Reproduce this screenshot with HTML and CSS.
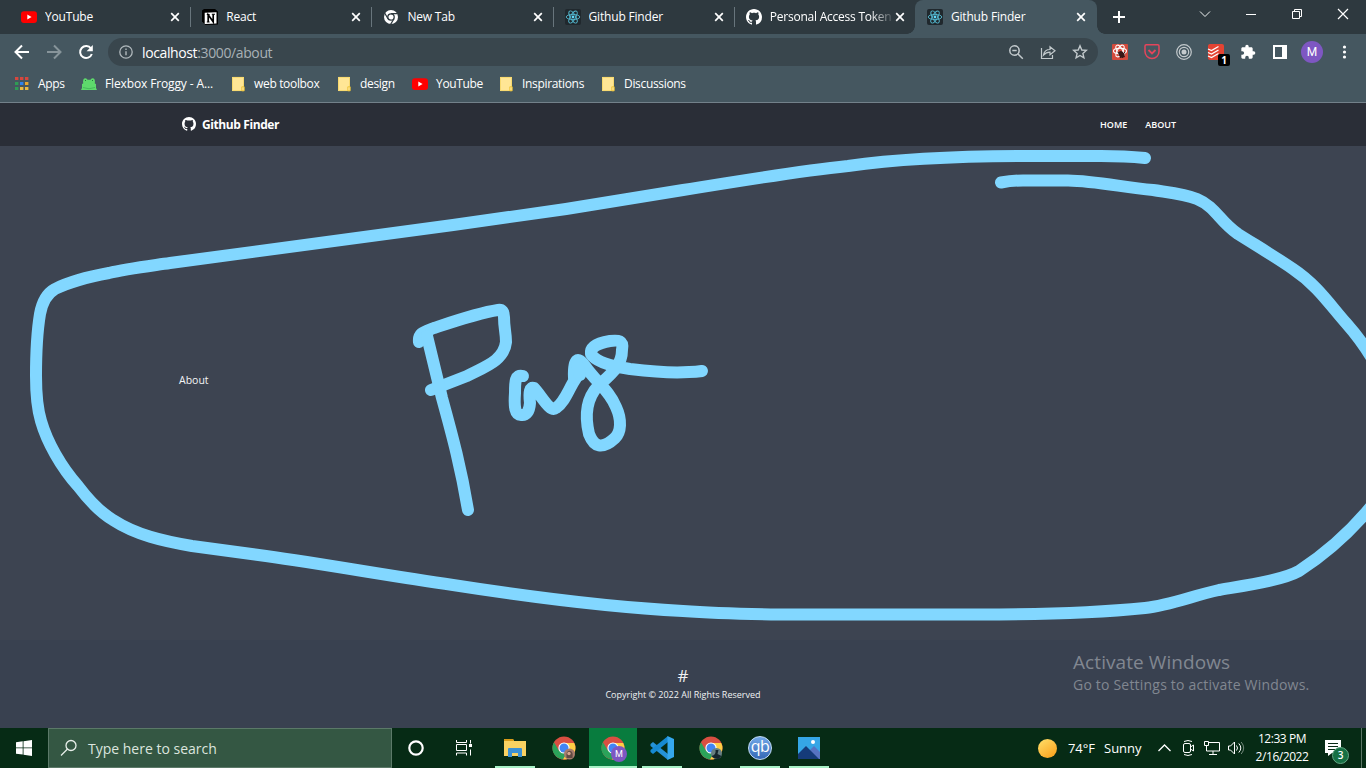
FILE: index.html
```html
<!DOCTYPE html>
<html lang="en">
<head>
<meta charset="utf-8">
<title>Github Finder</title>
<link rel="stylesheet" href="styles.css">
</head>
<body>
<svg class="defs" width="0" height="0" aria-hidden="true">
  <symbol id="close" viewBox="0 0 10 10"><path d="M1.2 1.2 8.8 8.8M8.8 1.2 1.2 8.8" stroke="#fff" stroke-width="1.7"/></symbol>
  <symbol id="youtube" viewBox="0 0 16 16"><rect y="2.2" width="16" height="11.8" rx="3" fill="#f00"/><path d="M6.3 5.6v4.9L10.6 8z" fill="#fff"/></symbol>
  <symbol id="react" viewBox="0 0 16 16"><rect width="16" height="16" rx="2" fill="#20282d"/><g fill="none" stroke="#53b7ce" stroke-width=".9"><ellipse cx="8" cy="8" rx="6.8" ry="2.6"/><ellipse cx="8" cy="8" rx="6.8" ry="2.6" transform="rotate(60 8 8)"/><ellipse cx="8" cy="8" rx="6.8" ry="2.6" transform="rotate(120 8 8)"/></g><circle cx="8" cy="8" r="1.4" fill="#61dafb"/></symbol>
  <symbol id="github" viewBox="0 0 16 16"><path fill="#fff" d="M8 0C3.58 0 0 3.58 0 8c0 3.54 2.29 6.53 5.47 7.59.4.07.55-.17.55-.38 0-.19-.01-.82-.01-1.49-2.01.37-2.53-.49-2.69-.94-.09-.23-.48-.94-.82-1.13-.28-.15-.68-.52-.01-.53.63-.01 1.08.58 1.23.82.72 1.21 1.87.87 2.33.66.07-.52.28-.87.51-1.07-1.78-.2-3.64-.89-3.64-3.95 0-.87.31-1.59.82-2.15-.08-.2-.36-1.02.08-2.12 0 0 .67-.21 2.2.82.64-.18 1.32-.27 2-.27s1.36.09 2 .27c1.53-1.04 2.2-.82 2.2-.82.44 1.1.16 1.92.08 2.12.51.56.82 1.27.82 2.15 0 3.07-1.87 3.75-3.65 3.95.29.25.54.73.54 1.48 0 1.07-.01 1.93-.01 2.2 0 .21.15.46.55.38A8.01 8.01 0 0 0 16 8c0-4.42-3.58-8-8-8z"/></symbol>
  <symbol id="folder" viewBox="0 0 16 16"><path d="M2 1h12v14H2z" fill="#ffe695"/><path d="M2.5 1.4v13.2h11V1.4z" fill="none" stroke="#f5d565" stroke-width=".8"/><path d="M11.8 14.8v-4h2.4v4z" fill="#ffe695" stroke="#ecc233" stroke-width=".9"/></symbol>
  <symbol id="chrome" viewBox="0 0 24 24"><circle cx="12" cy="12" r="11.5" fill="#d94f42"/><path d="M2 6.2A11.5 11.5 0 0 0 11 23.5l5.2-8.8H7z" fill="#2ba35a"/><path d="M22.2 7H12l4.6 7.6L11 23.5A11.5 11.5 0 0 0 22.2 7z" fill="#ffce44"/><circle cx="12" cy="12" r="5.6" fill="#fff"/><circle cx="12" cy="12" r="4.5" fill="#4285f4"/></symbol>
</svg>

<header class="browser">
  <div class="tabstrip">
    <div class="tab"><svg class="fav"><use href="#youtube"/></svg><span class="title">YouTube</span><svg class="x"><use href="#close"/></svg></div>
    <div class="tab"><svg class="fav" viewBox="0 0 16 16"><path d="M0 1.500 2 0h11l3 2.600V15.600L3.500 16 0 12.500z" fill="#000"/><path d="M2.700 3.800 14.500 3.200v11.200l-11.800.600z" fill="#fff"/><path d="M4.800 5.500h2.800M9.800 5.200h3.200M4.800 13h2.800" stroke="#000" stroke-width="1.100"/><path d="M6.200 13V5.800l5 7V5.200" fill="none" stroke="#000" stroke-width="1.700"/></svg><span class="title">React</span><svg class="x"><use href="#close"/></svg></div>
    <div class="tab"><svg class="fav" viewBox="0 0 16 16"><circle cx="8" cy="8" r="7" fill="#fff"/><circle cx="8" cy="8" r="3.200" fill="#fff" stroke="#2e393f" stroke-width="1.300"/><path d="M8 4.600h6.600M5 9.800 1.800 4.200M11 9.800l-3.400 5.600" stroke="#2e393f" stroke-width="1.200"/></svg><span class="title">New Tab</span><svg class="x"><use href="#close"/></svg></div>
    <div class="tab"><svg class="fav"><use href="#react"/></svg><span class="title">Github Finder</span><svg class="x"><use href="#close"/></svg></div>
    <div class="tab plain"><svg class="fav"><use href="#github"/></svg><span class="title fade">Personal Access Token</span><svg class="x"><use href="#close"/></svg></div>
    <div class="tab active"><svg class="fav"><use href="#react"/></svg><span class="title">Github Finder</span><svg class="x"><use href="#close"/></svg></div>
    <svg class="plus" viewBox="0 0 12 12"><path d="M6 0v12M0 6h12" stroke="#fff" stroke-width="2"/></svg>
    <div class="winctl">
      <svg viewBox="0 0 46 28"><path d="m18 11.500 5 5 5-5" fill="none" stroke="#eef1f2"/></svg>
      <svg viewBox="0 0 46 28"><path d="M18 14.500h10" stroke="#fff"/></svg>
      <svg viewBox="0 0 46 28"><path d="M18.500 11.500h7v7h-7zM20.500 11.500v-2h7v7h-2" fill="none" stroke="#fff"/></svg>
      <svg viewBox="0 0 46 28"><path d="m18 9 10 10M28 9 18 19" stroke="#fff" stroke-width="1.200"/></svg>
    </div>
  </div>

  <div class="toolbar">
    <div class="navbtns">
      <svg viewBox="0 0 32 32"><path d="M23 16H10M16 9.500 9.500 16l6.500 6.500" fill="none" stroke="#fff" stroke-width="2"/></svg>
      <svg viewBox="0 0 32 32"><path d="M9 16h13M16 9.500l6.500 6.500-6.500 6.500" fill="none" stroke="#87949a" stroke-width="2"/></svg>
      <svg viewBox="0 0 32 32"><path d="M21 12.500A6 6 0 1 0 21.800 18" fill="none" stroke="#fff" stroke-width="2"/><path d="M22.800 9v6.200h-6.200z" fill="#fff"/></svg>
    </div>
    <div class="omnibox">
      <svg class="info" viewBox="0 0 14 14"><circle cx="7" cy="7" r="6.200" fill="none" stroke="#b1b9bd" stroke-width="1.300"/><path d="M7 6.200v4M7 3.600v1.500" stroke="#b1b9bd" stroke-width="1.400"/></svg>
      <span class="url">localhost<span class="dim">:3000/about</span></span>
      <svg class="cell" viewBox="0 0 32 32"><g fill="none" stroke="#c2c9cc" stroke-width="1.500"><circle cx="14.500" cy="14.500" r="4.700"/><path d="m18 18 4.800 4.800M12.300 14.500h4.400"/></g></svg>
      <svg class="cell" viewBox="0 0 32 32"><path d="M9.500 12v10.500h11V19M11.500 19q1-5.500 6.500-5.500v-2.700l5 4-5 4v-2.600q-4 0-6.500 2.800z" fill="none" stroke="#c2c9cc" stroke-width="1.200"/></svg>
      <svg class="cell" viewBox="0 0 32 32"><path d="m16 9.800 1.800 4.200 4.500.4-3.400 3 1 4.400-3.900-2.300-3.900 2.300 1-4.400-3.400-3 4.500-.4z" fill="none" stroke="#c2c9cc" stroke-width="1.400"/></svg>
    </div>
    <div class="extensions">
      <svg viewBox="0 0 32 32"><rect x="8" y="8" width="16" height="16" rx="1" fill="#d34b3d"/><g fill="none" stroke="#fff" stroke-width="1.100"><ellipse cx="16" cy="15" rx="6.500" ry="2.700"/><ellipse cx="16" cy="15" rx="6.500" ry="2.700" transform="rotate(60 16 15)"/><ellipse cx="16" cy="15" rx="6.500" ry="2.700" transform="rotate(120 16 15)"/></g><ellipse cx="17.500" cy="18.500" rx="2.700" ry="3.600" transform="rotate(-35 17.500 18.500)" fill="#391615"/><path d="m13.500 16 7.500 5M21 16l-5 6" stroke="#391615"/></svg>
      <svg viewBox="0 0 32 32"><path d="M9 10q0-1.200 1.200-1.200h11.600Q23 8.800 23 10v5.500a7 7 0 0 1-14 0z" fill="none" stroke="#e4455b" stroke-width="1.500"/><path d="m12.500 14 3.500 3.400 3.500-3.400" fill="none" stroke="#e4455b" stroke-width="1.800"/></svg>
      <svg viewBox="0 0 32 32"><g fill="none" stroke="#c4cacd" stroke-width="1.200"><circle cx="16" cy="16" r="7.300"/><circle cx="16" cy="16" r="4.700"/></g><circle cx="16" cy="16" r="2.500" fill="#c4cacd"/></svg>
      <div class="todo"><svg viewBox="0 0 32 32"><rect x="8" y="8" width="16" height="16" rx="2" fill="#e44332"/><path d="m8 13 3.500 1.500 7-4M8 16.500l3.500 1.500 7-4M8 20l3.500 1.500 7-4" fill="none" stroke="#fff" stroke-width="1.300"/></svg><span class="count">1</span></div>
      <svg viewBox="0 0 24 24" class="puzzle"><path fill="#fff" d="M20.500 11H19V7c0-1.100-.9-2-2-2h-4V3.500a2.500 2.500 0 0 0-5 0V5H4c-1.100 0-2 .9-2 2v3.800h1.500a2.700 2.700 0 0 1 0 5.400H2V20c0 1.100.9 2 2 2h3.800v-1.500a2.700 2.700 0 0 1 5.400 0V22H17c1.100 0 2-.9 2-2v-4h1.500a2.500 2.500 0 0 0 0-5z"/></svg>
      <svg viewBox="0 0 32 32"><path d="M9 9h14v14H9zm2 2v10h7V11z" fill="#fff" fill-rule="evenodd"/></svg>
      <span class="avatar">M</span>
      <svg viewBox="0 0 32 32"><g fill="#fff"><circle cx="16.500" cy="11" r="1.600"/><circle cx="16.500" cy="16" r="1.600"/><circle cx="16.500" cy="21" r="1.600"/></g></svg>
    </div>
  </div>

  <nav class="bookmarks">
    <span><svg viewBox="0 0 16 16"><path d="M1 1h3.400v3H1zM6 1h3.400v3H6zM11 1h3.400v3H11z" fill="#d7473e"/><path d="M1 6h3.400v3H1z" fill="#2f9c55"/><path d="M6 6h3.400v3H6z" fill="#2f83ed"/><path d="M11 6h3.400v3H11z" fill="#e9a72f"/><path d="M1 11h3.400v3H1z" fill="#2f9c55"/><path d="M6 11h3.400v3H6zM11 11h3.400v3H11z" fill="#eaba43"/></svg>Apps</span>
    <span class="frog"><svg viewBox="0 0 16 16"><path d="M2.200 7.500Q1.500 2.500 4 2.200q2-.2 2.500 1.500h3Q10 2 12 2.200q2.500.3 1.800 5.300l1.200.5v4l1 2H0l1-2V8z" fill="#5ed96c"/><path d="M2 11.500Q8 14 14 11.500" stroke="#45b95b" fill="none"/><path d="M4 4.500h1M11 4.500h1" stroke="#237b3b"/></svg>Flexbox Froggy - A...</span>
    <span><svg><use href="#folder"/></svg>web toolbox</span>
    <span><svg><use href="#folder"/></svg>design</span>
    <span><svg><use href="#youtube"/></svg>YouTube</span>
    <span><svg><use href="#folder"/></svg>Inspirations</span>
    <span><svg><use href="#folder"/></svg>Discussions</span>
  </nav>
</header>

<div class="page">
  <nav class="navbar">
    <span class="brand"><svg><use href="#github"/></svg>Github Finder</span>
    <span class="links"><a>HOME</a><a>ABOUT</a></span>
  </nav>
  <main class="content">About</main>
  <footer class="footer">
    <span class="hash">#</span>
    <span class="copy">Copyright © 2022 All Rights Reserved</span>
  </footer>
  <!-- freehand annotation layer -->
  <svg class="ink" viewBox="0 103 1366 625">
    <path d="M1145 158C1130 156.500 1115 156 1101 156H1030C945 156 890 160 848 166C790 172 735 182 683 190L566 209L453 225L170 263C142 267 125 269 109 273C87 277 67 283 55 289C46 294 42 303 40 314C37 332 36 355 36 376C36 393 38 411 41 421C47 442 61 467 78 486C90 502 100 512 113 520C136 535 163 541 192 546C220 550 245 553 266 556C330 565 390 576 453 585C530 597 605 607 683 611C710 613 745 614 780 614.500H980C1040 614.500 1095 613 1145 608C1170 605 1192 596 1219 590C1248 585 1283 580 1299 571C1325 554 1350 533 1374 503"/>
    <path d="M1001 182.500Q1012 180.500 1023 180.500H1068C1095 181 1122 187 1153 190C1173 193 1185 194 1197 199C1216 207 1219 221 1238 234C1257 246 1274 256 1293 269C1317 285 1330 305 1346 323C1354 332 1364 344 1374 362"/>
    <path d="M419 342C418 333 424 332 434 328C455 321 478 313 498 310Q504 309 504 317C504 329 506 332 506 342C504 361 484 367 467 376Q449 383 431 390"/>
    <path d="M427 336L442 398C453 438 461 468 468 510"/>
    <path d="M523 376C515 374 515 382 515 393C514 407 515 415 521 415Q529 416 530 403Q528 386 534 388C541 395 550 413 556 408C565 402 569 388 576 378"/>
    <path d="M574 378C573 358 578 356 585 366C596 382 609 390 616 407C622 420 621 432 615 438C602 450 594 447 589 434C585 417 585 400 598 386C611 374 622 366 622 350C624 340 618 340 610 341C598 343 590 347 591 354C595 361 610 366 630 369C655 372 676 373 689 372Q696 372 702 371"/>
    <path d="M577 364 580 375"/>
  </svg>
  <div class="watermark"><span class="wm1">Activate Windows</span><span class="wm2">Go to Settings to activate Windows.</span></div>
</div>

<footer class="taskbar">
  <div class="start"><svg viewBox="0 0 16 16"><path d="M0 2.300 6.700 1.300v6.200H0zM7.500 1.200 16 0v7.500H7.500zM0 8.300h6.700v6.300L0 13.700zM7.500 8.300H16V16l-8.500-1.200z" fill="#fff"/></svg></div>
  <div class="search"><svg viewBox="0 0 18 18"><circle cx="11" cy="6.500" r="5" fill="none" stroke="#e8efea" stroke-width="1.300"/><path d="m7.500 10-6.500 6.500" stroke="#e8efea" stroke-width="1.300"/></svg><span>Type here to search</span></div>
  <div class="app"><svg viewBox="0 0 24 24"><circle cx="12" cy="12" r="6.700" fill="none" stroke="#fff" stroke-width="2.200"/></svg></div>
  <div class="app"><svg viewBox="0 0 24 24"><path d="M4.500 4v2.500h10V4M4.500 19.500V17h10v2.500M4.500 8.500h10v6h-10zM18.500 4v3.500M18.500 13.500v6" fill="none" stroke="#fff"/><path d="M17 8h3v3h-3z" fill="#fff"/></svg></div>
  <div class="pinned">
    <div class="app open"><svg viewBox="0 0 24 24"><path d="M1 3h9l1 2h12v15H1z" fill="#f9d262"/><path d="M1 3h9l1 2H1z" fill="#d99b19"/><path d="M5 21v-8q0-1 1-1h12q1 0 1 1v8h-4v-4H9v4z" fill="#3c91d4"/></svg></div>
    <div class="app"><svg viewBox="0 0 24 24"><use href="#chrome"/><circle cx="17.500" cy="18" r="5.500" fill="#a77c6c"/><path d="M14.500 22v-4q1-4 4-3t2 7z" fill="#614a43"/><circle cx="17" cy="17.500" r="1.700" fill="#d7a58d"/></svg></div>
    <div class="app open current"><svg viewBox="0 0 24 24"><use href="#chrome"/></svg><span class="mini">M</span></div>
    <div class="app open"><svg viewBox="0 0 24 24"><path d="M.5 8 3 6l15 12v6L.5 10z" fill="#2592d7"/><path d="M.5 16 3 18 18 6V0L.5 14z" fill="#168ad2"/><path d="m17.500 0 6.500 3v18l-6.500 3z" fill="#35a8ed"/></svg></div>
    <div class="app"><svg viewBox="0 0 24 24"><use href="#chrome"/><circle cx="17.500" cy="17.500" r="5.500" fill="#667e80"/><path d="M12.500 20q5-1 4-6h3l-1 4 4 2-3 3q-5 0-7-3z" fill="#15252d"/></svg></div>
    <div class="app open"><span class="qb">qb</span></div>
    <div class="app open"><svg viewBox="0 0 24 24"><path d="M1 1h22v22H1z" fill="#35a6e6"/><path d="M12 15 17 10l6 6v7h-5z" fill="#5673c2"/><path d="m1 18 8-8 13 13H1z" fill="#153b79"/><circle cx="16" cy="6" r="2" fill="#fff"/></svg></div>
  </div>
  <div class="tray">
    <span class="sun"></span><span class="temp">74°F</span><span class="sunny">Sunny</span>
    <div class="trayicons">
      <svg viewBox="0 0 24 24"><path d="m6.500 15 6-6 6 6" fill="none" stroke="#fff" stroke-width="1.300"/></svg>
      <svg viewBox="0 0 24 24"><path d="M8 5.500q4-2 8 0M8 18.500q4 2 8 0M7.500 9q0-1.500 1.500-1.500h4q1.500 0 1.500 1.500v6q0 1.500-1.500 1.500H9q-1.500 0-1.500-1.500zM14.500 11l3-2v6l-3-2z" fill="none" stroke="#fff"/></svg>
      <svg viewBox="0 0 24 24"><path d="M9 6.500h10.500v8.500H6.500v-4M4.500 5.500h4v4h-4zM6.500 9.500V11M13 15v3M9 18.500h8" fill="none" stroke="#fff"/></svg>
      <svg viewBox="0 0 24 24"><path d="M4.500 10v4h2l4 4V6l-4 4zM12.500 9.500q2 2.500 0 5M14.800 7.500q4 4.500 0 9" fill="none" stroke="#fff"/><path d="M17.200 6q5 6 0 12" fill="none" stroke="#72887b"/></svg>
    </div>
    <div class="clock"><span>12:33 PM</span><span>2/16/2022</span></div>
    <div class="notif"><svg viewBox="0 0 16 16"><path d="M0 0h16v13h-9l-4 3v-3H0z" fill="#fff"/><path d="M3 3.500h10M3 6.500h10M3 9.500h7" stroke="#0a2b17"/></svg><span class="nbadge">3</span></div>
    <span class="edge"></span>
  </div>
</footer>
</body>
</html>
```
FILE: styles.css
```css
* { box-sizing: border-box; }
body { margin: 0; width: 1366px; height: 768px; overflow: hidden; display: flex; flex-direction: column; font-family: "Open Sans", "Noto Sans", sans-serif; font-size: 12px; color: #fff; background: #3d4451; }
svg { display: block; flex: none; }
.defs { position: absolute; }

.browser { height: 103px; background: #455760; border-bottom: 1px solid #73818a; }
.tabstrip { height: 34px; background: #2e393f; padding-left: 9px; display: flex; }
.tab { width: 181.200px; height: 34px; flex: none; display: flex; align-items: center; padding: 0 10px 0 12px; position: relative; }
.tab::after { content: ""; position: absolute; right: -1px; top: 7px; width: 1px; height: 20px; background: #68757c; }
.tab.plain::after { display: none; }
.fav { width: 16px; height: 16px; }
.title { margin-left: 8px; flex: 1; min-width: 0; white-space: nowrap; overflow: hidden; letter-spacing: -.18px; line-height: 17px; padding-bottom: 1px; }
.tab .fade { flex: none; margin-right: -3px; letter-spacing: -.23px; -webkit-mask-image: linear-gradient(90deg, #000 82%, rgba(0,0,0,.15)); mask-image: linear-gradient(90deg, #000 82%, rgba(0,0,0,.15)); }
.x { width: 10px; height: 10px; margin-left: auto; }
.tab.active { background: #455760; border-radius: 8px 8px 0 0; width: 182px; padding-right: 11px; }
.tab.active::before, .tab.active::after { content: ""; display: block; background: none; position: absolute; top: auto; bottom: 0; width: 8px; height: 8px; }
.tab.active::before { left: -8px; background: radial-gradient(circle at 0 0, transparent 7.500px, #455760 8px); }
.tab.active::after { right: -8px; background: radial-gradient(circle at 100% 0, transparent 7.500px, #455760 8px); }
.plus { width: 12px; height: 12px; margin: 11px 0 0 16px; }
.winctl { margin-left: auto; display: flex; }
.winctl svg { width: 46px; height: 28px; }

.toolbar { height: 34px; padding: 2px 6px 0; display: flex; align-items: center; }
.navbtns, .extensions { display: flex; align-items: center; }
.navbtns svg, .extensions > svg, .todo svg { width: 32px; height: 32px; }
.omnibox { width: 990px; height: 28px; margin: 0 6px; border-radius: 14px; background: #39464d; display: flex; align-items: center; padding: 0 2px 0 11px; }
.info { width: 14px; height: 14px; }
.url { margin-left: 9px; flex: 1; font-size: 14px; letter-spacing: -.38px; }
.dim { color: #a8b1b6; }
.cell { width: 32px; height: 32px; }
.extensions .puzzle { width: 16px; height: 16px; margin: 0 8px; }
.todo { position: relative; }
.count { position: absolute; left: 18px; top: 18px; width: 12px; height: 12px; border-radius: 2px; background: #000; font: bold 10px/12px "Open Sans", sans-serif; text-align: center; }
.avatar { width: 22px; height: 22px; margin: 0 5px; border-radius: 50%; background: #7e57c2; text-align: center; line-height: 22px; font-family: Roboto, sans-serif; }
.bookmarks { height: 34px; padding: 0 0 3px 14px; display: grid; grid-template-columns: 67px 149px 106px 76px 86px 102px 110px; align-items: center; }
.bookmarks span { display: flex; align-items: center; white-space: nowrap; letter-spacing: -.33px; }
.bookmarks svg { width: 16px; height: 16px; margin-right: 8px; }
.bookmarks .frog { letter-spacing: -.13px; }

.page { height: 625px; position: relative; display: flex; flex-direction: column; }
.navbar { height: 43px; background: #2a2e37; padding: 0 190px 1px 182px; display: flex; align-items: center; justify-content: space-between; }
.brand { display: flex; align-items: center; gap: 6px; font-weight: 700; letter-spacing: -.4px; }
.brand svg { width: 14px; height: 14px; }
.links { display: flex; gap: 18px; font-size: 9px; font-weight: 600; }
.content { flex: 1; padding: 0 0 26px 179px; display: flex; align-items: center; font-size: 10.500px; color: #f4f5f6; }
.footer { height: 88px; background: #394150; display: flex; flex-direction: column; align-items: center; padding-top: 25px; color: #f0f1f3; }
.hash { font-size: 17px; line-height: 21px; }
.copy { font-size: 9px; line-height: 18px; }
.ink { position: absolute; inset: 0; width: 1366px; height: 625px; fill: none; stroke: #82d7ff; stroke-width: 12; stroke-linecap: round; stroke-linejoin: round; pointer-events: none; }
.watermark { position: absolute; left: 1073px; top: 546px; display: flex; flex-direction: column; color: #818791; white-space: nowrap; }
.wm1 { font-size: 19px; line-height: 26px; letter-spacing: .08px; }
.wm2 { font-size: 14px; line-height: 20px; letter-spacing: .2px; }

.taskbar { height: 40px; background: #062b15; display: flex; }
.start { width: 48px; display: grid; place-items: center; }
.start svg { width: 16px; height: 16px; }
.search { width: 344px; background: #345743; border: 1px solid #5b7968; display: flex; align-items: center; padding-left: 11px; color: #dce5df; font-size: 14px; }
.search svg { width: 18px; height: 18px; margin-right: 10px; }
.app { width: 48px; height: 40px; display: grid; place-items: center; position: relative; }
.app > svg { width: 24px; height: 24px; }
.pinned { display: flex; gap: 1px; margin-left: 3px; }
.open::after { content: ""; position: absolute; left: 4px; right: 4px; bottom: 0; height: 2px; background: #a7f1c6; }
.current { background: #087c3e; }
.current::after { left: 0; right: 0; }
.mini { position: absolute; left: 22px; top: 18px; width: 16px; height: 16px; border-radius: 50%; background: #7e57c2; font: 9px/16px Roboto, sans-serif; text-align: center; }
.qb { width: 24px; height: 24px; border-radius: 50%; border: 1px solid #c5def8; background: linear-gradient(#72a8e8, #3468b5); text-align: center; font-size: 16px; line-height: 19px; letter-spacing: -.5px; }
.tray { margin-left: auto; display: flex; align-items: center; white-space: nowrap; }
.sun { width: 19px; height: 19px; border-radius: 50%; background: linear-gradient(145deg, #ffe06b, #f99d16); }
.temp { width: 36px; margin-left: 11px; font-size: 13px; letter-spacing: -.1px; }
.sunny { width: 48px; font-size: 13px; }
.trayicons { display: flex; margin-right: 1px; }
.trayicons svg { width: 24px; height: 24px; }
.clock { width: 66px; display: flex; flex-direction: column; align-items: center; line-height: 18px; letter-spacing: -.45px; padding-bottom: 1px; }
.notif { width: 24px; height: 16px; margin-left: 10px; position: relative; }
.notif svg { width: 16px; height: 16px; }
.nbadge { position: absolute; left: 7px; top: 7px; width: 17px; height: 17px; border: 1px solid #65a785; border-radius: 50%; background: #167044; font-size: 10px; font-weight: 600; line-height: 15px; text-align: center; }
.edge { width: 1px; height: 40px; background: #5c7666; margin: 0 4px 0 12px; }
```
